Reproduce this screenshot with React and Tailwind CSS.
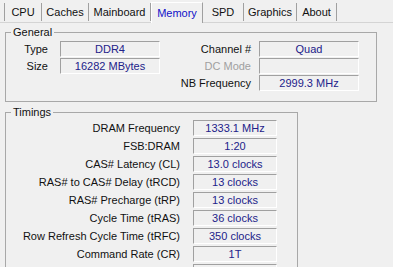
import React from 'react';

const tabs = [
  { name: 'CPU', w: 'w-[38px]', first: true },
  { name: 'Caches', w: 'w-[47px]' },
  { name: 'Mainboard', w: 'w-[62px]' },
  { name: 'Memory', w: 'w-[52px]', active: true },
  { name: 'SPD', w: 'w-[41px]' },
  { name: 'Graphics', w: 'w-[53px]' },
  { name: 'About', w: 'w-[40px]' },
];

const timings = [
  ['DRAM Frequency', '1333.1 MHz'],
  ['FSB:DRAM', '1:20'],
  ['CAS# Latency (CL)', '13.0 clocks'],
  ['RAS# to CAS# Delay (tRCD)', '13 clocks'],
  ['RAS# Precharge (tRP)', '13 clocks'],
  ['Cycle Time (tRAS)', '36 clocks'],
  ['Row Refresh Cycle Time (tRFC)', '350 clocks'],
  ['Command Rate (CR)', '1T'],
  ['', ''],
];

function Field({ value, className }) {
  return (
    <div className={`h-[16px] border-t border-l border-[#a0a0a0] border-r border-b border-r-white border-b-white text-center leading-[14px] text-[#22228a] ${className}`}>
      {value}
    </div>
  );
}

export default function App() {
  return (
    <div className="w-[393px] h-[267px] overflow-hidden bg-[#f0f0f0] text-[11px] leading-[16px] text-[#111] font-['Liberation_Sans',Arial,sans-serif]">
      {/* Tabs */}
      <div className="h-[23px] flex items-end pl-[4px] border-b border-[#d4d4d4]">
        {tabs.map((t) =>
          t.active ? (
            <div
              key={t.name}
              className={`${t.w} h-[21px] -mb-px bg-[#f0f0f0] border-t border-l border-white border-r border-r-[#a0a0a0] text-[#1010c8] text-center leading-[20px]`}
            >
              {t.name}
            </div>
          ) : (
            <div
              key={t.name}
              className={`${t.w} h-[18px] mb-px border-r border-[#a0a0a0] ${t.first ? 'border-l' : ''} text-center leading-[18px]`}
            >
              {t.name}
            </div>
          )
        )}
      </div>

      {/* General */}
      <fieldset className="ml-[5px] mt-[3px] w-[372px] border border-[#a8a8a8] pb-[10px]">
        <legend className="ml-[5px] px-[2px] leading-[13px]">General</legend>
        <div className="pt-[2px] flex flex-col gap-[1px]">
          <div className="flex items-center">
            <div className="w-[42px] text-right">Type</div>
            <Field value="DDR4" className="ml-[12px] w-[100px]" />
            <div className="w-[91px] text-right">Channel #</div>
            <Field value="Quad" className="ml-[8px] w-[100px]" />
          </div>
          <div className="flex items-center">
            <div className="w-[42px] text-right">Size</div>
            <Field value="16282 MBytes" className="ml-[12px] w-[100px]" />
            <div className="w-[91px] text-right text-[#a0a0a0]">DC Mode</div>
            <Field value="" className="ml-[8px] w-[100px]" />
          </div>
          <div className="flex items-center">
            <div className="w-[245px] text-right">NB Frequency</div>
            <Field value="2999.3 MHz" className="ml-[8px] w-[100px]" />
          </div>
        </div>
      </fieldset>

      {/* Timings */}
      <fieldset className="ml-[5px] mt-[4px] w-[293px] border border-[#a8a8a8] pb-[10px]">
        <legend className="ml-[5px] px-[2px] leading-[13px]">Timings</legend>
        <div className="pt-[1px] flex flex-col gap-[2px]">
          {timings.map(([label, value], i) => (
            <div key={i} className="flex items-center">
              <div className="w-[174px] text-right whitespace-nowrap">{label}</div>
              <Field value={value} className="ml-[13px] w-[84px]" />
            </div>
          ))}
        </div>
      </fieldset>
    </div>
  );
}
